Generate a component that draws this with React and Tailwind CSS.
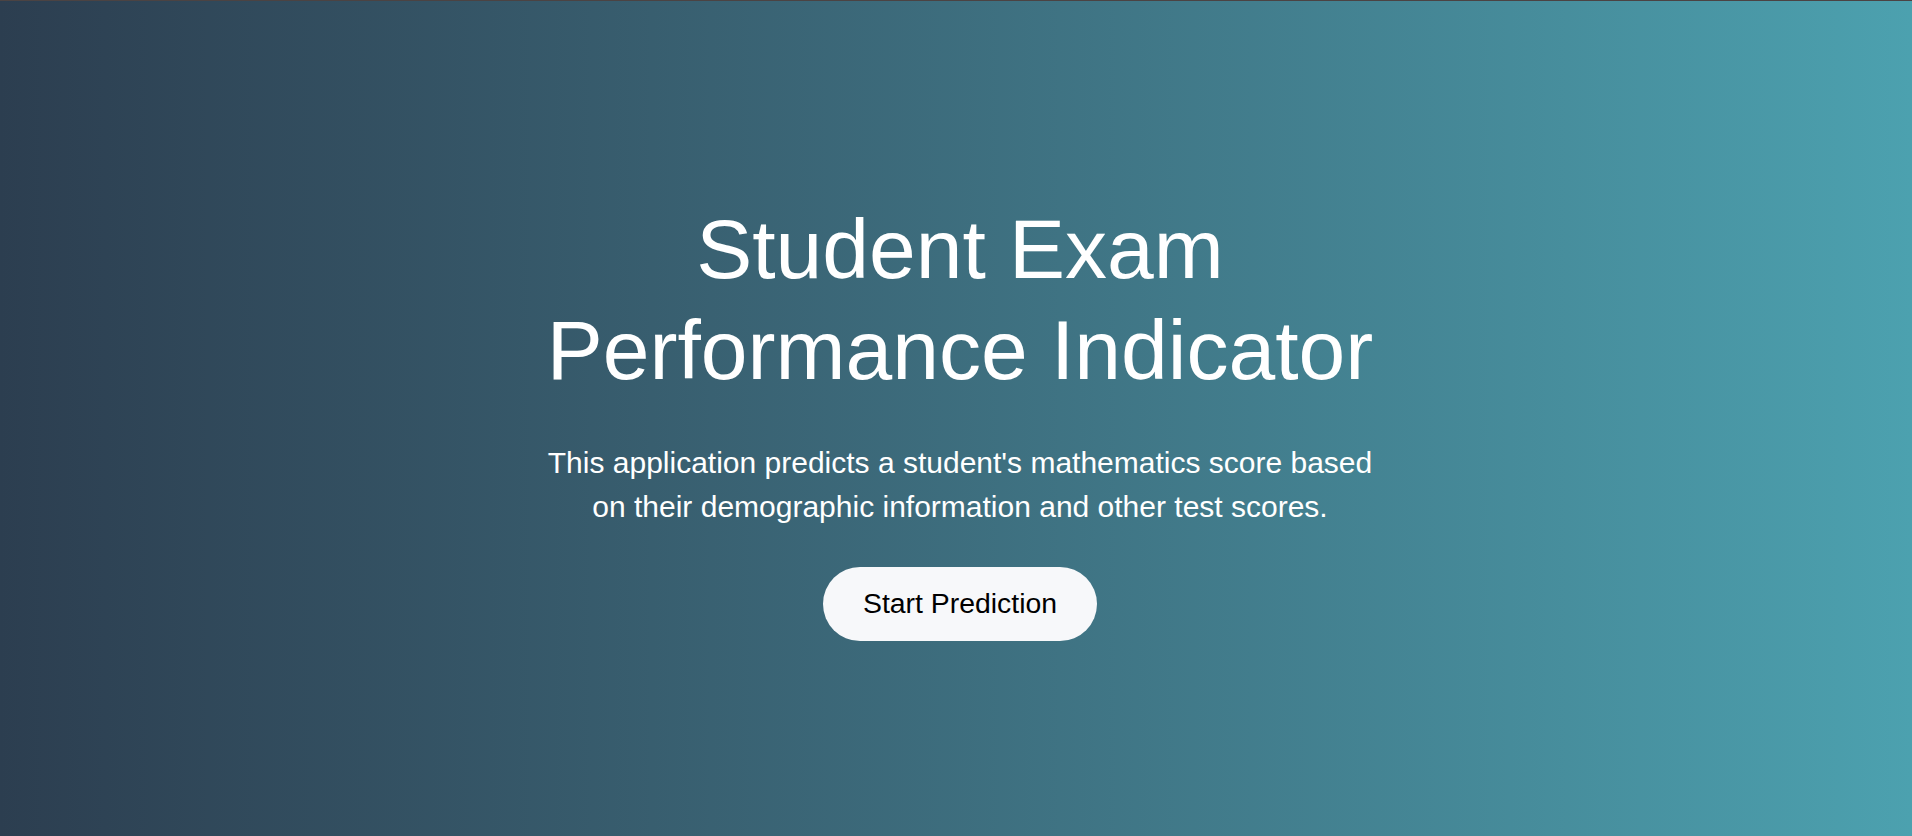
// Landing hero for the exam score predictor
export default function App() {
  return (
    <div
      className="min-h-screen w-full flex items-center justify-center border-t border-[#4b4343] bg-gradient-to-r from-[#2c3e50] to-[#4ca1af] pl-[8px] pt-[3px] text-white"
      style={{ fontFamily: '"Liberation Sans", Arial, sans-serif' }}
    >
      <div className="flex flex-col items-center text-center">
        <h1 className="max-w-[900px] text-[84px] leading-[1.2] font-normal">
          Student Exam Performance Indicator
        </h1>
        <p className="mt-[40px] max-w-[840px] text-[30px] leading-[44px]">
          This application predicts a student's mathematics score based on their demographic information and other test scores.
        </p>
        <button className="mt-[38px] h-[74px] w-[274px] rounded-full bg-[#f7f8fa] text-[28.4px] text-black">
          Start Prediction
        </button>
      </div>
    </div>
  );
}
